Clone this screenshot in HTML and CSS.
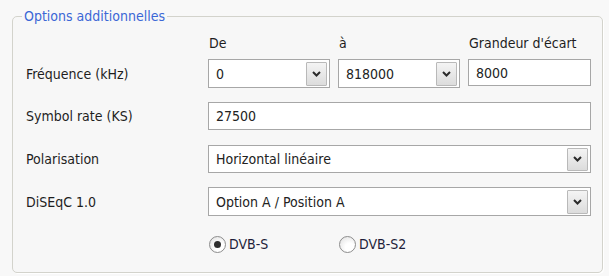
FILE: index.html
```html
<!DOCTYPE html>
<html lang="fr">
<head>
<meta charset="utf-8">
<link rel="stylesheet" href="styles.css">
</head>
<body>
<div class="wrap">
  <fieldset class="group">
    <legend class="title">Options additionnelles</legend>
    <div class="form">
      <div class="hdr r1 c2">De</div>
      <div class="hdr r1 c3">à</div>
      <div class="hdr r1 c4">Grandeur d'écart</div>

      <div class="lbl r2 h29">Fréquence (kHz)</div>
      <div class="combo r2 c2 h29"><span class="val">0</span><span class="btn"><svg width="9" height="6" viewBox="0 0 9 6"><path d="M1 1 L4.5 4.5 L8 1" fill="none" stroke="#2b2b2b" stroke-width="2"/></svg></span></div>
      <div class="combo r2 c3 h29"><span class="val">818000</span><span class="btn"><svg width="9" height="6" viewBox="0 0 9 6"><path d="M1 1 L4.5 4.5 L8 1" fill="none" stroke="#2b2b2b" stroke-width="2"/></svg></span></div>
      <div class="edit r2 c4 h27">8000</div>

      <div class="lbl r3 h28">Symbol rate (KS)</div>
      <div class="edit r3 h28 span3">27500</div>

      <div class="lbl r4 h28">Polarisation</div>
      <div class="combo r4 h28 span3"><span class="val">Horizontal linéaire</span><span class="btn"><svg width="9" height="6" viewBox="0 0 9 6"><path d="M1 1 L4.5 4.5 L8 1" fill="none" stroke="#2b2b2b" stroke-width="2"/></svg></span></div>

      <div class="lbl r5 h29">DiSEqC 1.0</div>
      <div class="combo r5 h29 span3"><span class="val">Option A / Position A</span><span class="btn"><svg width="9" height="6" viewBox="0 0 9 6"><path d="M1 1 L4.5 4.5 L8 1" fill="none" stroke="#2b2b2b" stroke-width="2"/></svg></span></div>

      <div class="radio r6 c2"><span class="dot on"></span><span>DVB-S</span></div>
      <div class="radio r6 c3"><span class="dot"></span><span>DVB-S2</span></div>
    </div>
  </fieldset>
</div>
</body>
</html>
```
FILE: styles.css
```css
html, body {
  margin: 0;
  padding: 0;
  background: #f8f8f8;
}
body {
  width: 609px;
  height: 276px;
  overflow: hidden;
  font-family: "DejaVu Sans Condensed", "DejaVu Sans", sans-serif;
  font-size: 14px;
  color: #1e1e1e;
}
.wrap {
  padding: 8px 6px 3px 12px;
}
.group {
  box-sizing: border-box;
  margin: 0;
  padding: 0 11px 0 13px;
  height: 265px;
  border: 1px solid #d3d3cc;
  border-radius: 5px;
  background: #f7f7f7;
  box-shadow: 1px 1px 0 #ffffff;
}
.title {
  margin-left: -4px;
  padding: 0 2px;
  line-height: 16px;
  color: #3b67d6;
}
.form {
  display: grid;
  grid-template-columns: 174px 122px 122px 123px;
  grid-template-rows: 24px 43px 43px 42px 45px 24px;
  column-gap: 8px;
  padding-top: 11px;
  align-items: start;
}
.r1 { grid-row: 1; }
.r2 { grid-row: 2; }
.r3 { grid-row: 3; }
.r4 { grid-row: 4; }
.r5 { grid-row: 5; }
.r6 { grid-row: 6; }
.c2 { grid-column: 2; }
.c3 { grid-column: 3; }
.c4 { grid-column: 4; }
.span3 { grid-column: 2 / span 3; }
.hdr {
  line-height: 16px;
  padding-left: 1px;
}
.lbl {
  grid-column: 1;
  display: flex;
  align-items: center;
}
.h27 { height: 27px; }
.h28 { height: 28px; }
.h29 { height: 29px; }
.edit, .combo {
  box-sizing: border-box;
  border: 1px solid #a7a7a7;
  background: #ffffff;
  display: flex;
  align-items: center;
  padding-left: 7px;
  color: #222;
}
.combo {
  padding-right: 2px;
  justify-content: space-between;
}
.val {
  white-space: nowrap;
}
.btn {
  box-sizing: border-box;
  width: 21px;
  height: calc(100% - 3px);
  border: 1px solid #b9b9b9;
  border-radius: 1px;
  background: linear-gradient(#f4f4f4, #dcdcdc);
  display: flex;
  align-items: center;
  justify-content: center;
}
.radio {
  display: flex;
  align-items: center;
  gap: 3px;
  height: 24px;
  padding-left: 1px;
  color: #1e1e3a;
}
.dot {
  box-sizing: border-box;
  width: 17px;
  height: 17px;
  border-radius: 50%;
  border: 1px solid #8d8d8d;
  background: radial-gradient(circle at 65% 70%, #ffffff 30%, #dedede 100%);
  display: flex;
  align-items: center;
  justify-content: center;
}
.dot.on::after {
  content: "";
  width: 7px;
  height: 7px;
  border-radius: 50%;
  background: #2e2e2e;
}
```
